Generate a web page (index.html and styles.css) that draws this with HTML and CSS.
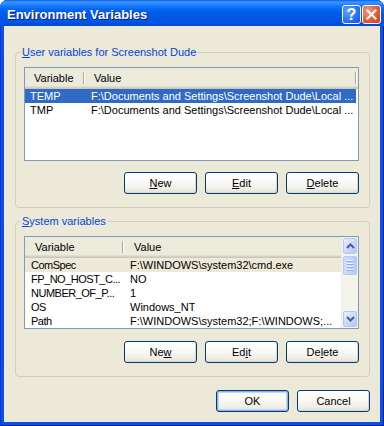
FILE: index.html
```html
<!DOCTYPE html>
<html lang="en">
<head>
    <meta charset="UTF-8">
    <title>Environment Variables</title>
    <link rel="stylesheet" href="styles.css">
</head>
<body>
    <div class="window">
        <div class="titlebar">
            <span class="title">Environment Variables</span>
            <div class="caption-buttons">
                <span class="cap cap-help">?</span>
                <span class="cap cap-close">
                    <svg width="11" height="11" viewBox="0 0 11 11"><path d="M1.5 1.5 L9.5 9.5 M9.5 1.5 L1.5 9.5" stroke="#fff" stroke-width="2" stroke-linecap="square"/></svg>
                </span>
            </div>
        </div>

        <div class="client">
            <fieldset class="group">
                <legend><u>U</u>ser variables for Screenshot Dude</legend>
                <div class="listview user-list">
                    <div class="lv-header">
                        <span class="col col-var">Variable</span>
                        <span class="col col-val">Value</span>
                    </div>
                    <div class="lv-row selected">
                        <span class="cell cell-var">TEMP</span>
                        <span class="cell">F:\Documents and Settings\Screenshot Dude\Local ...</span>
                    </div>
                    <div class="lv-row">
                        <span class="cell cell-var">TMP</span>
                        <span class="cell">F:\Documents and Settings\Screenshot Dude\Local ...</span>
                    </div>
                </div>
                <div class="button-row">
                    <button class="btn"><u>N</u>ew</button>
                    <button class="btn"><u>E</u>dit</button>
                    <button class="btn"><u>D</u>elete</button>
                </div>
            </fieldset>

            <fieldset class="group group-system">
                <legend><u>S</u>ystem variables</legend>
                <div class="listview system-list">
                    <div class="lv-body">
                        <div class="lv-header">
                            <span class="col col-var">Variable</span>
                            <span class="col col-val">Value</span>
                        </div>
                        <div class="lv-row inactive">
                            <span class="cell cell-var">ComSpec</span>
                            <span class="cell">F:\WINDOWS\system32\cmd.exe</span>
                        </div>
                        <div class="lv-row">
                            <span class="cell cell-var">FP_NO_HOST_C...</span>
                            <span class="cell">NO</span>
                        </div>
                        <div class="lv-row">
                            <span class="cell cell-var">NUMBER_OF_P...</span>
                            <span class="cell">1</span>
                        </div>
                        <div class="lv-row">
                            <span class="cell cell-var">OS</span>
                            <span class="cell">Windows_NT</span>
                        </div>
                        <div class="lv-row">
                            <span class="cell cell-var">Path</span>
                            <span class="cell">F:\WINDOWS\system32;F:\WINDOWS;...</span>
                        </div>
                    </div>
                    <div class="scrollbar">
                        <span class="sb-btn">
                            <svg width="9" height="6" viewBox="0 0 9 6"><path d="M1 5 L4.5 1.5 L8 5" fill="none" stroke="#4D6185" stroke-width="2"/></svg>
                        </span>
                        <div class="sb-track">
                            <span class="sb-thumb"><i></i><i></i><i></i><i></i></span>
                        </div>
                        <span class="sb-btn">
                            <svg width="9" height="6" viewBox="0 0 9 6"><path d="M1 1 L4.5 4.5 L8 1" fill="none" stroke="#4D6185" stroke-width="2"/></svg>
                        </span>
                    </div>
                </div>
                <div class="button-row button-row-system">
                    <button class="btn">Ne<u>w</u></button>
                    <button class="btn">Ed<u>i</u>t</button>
                    <button class="btn">De<u>l</u>ete</button>
                </div>
            </fieldset>

            <div class="dialog-buttons">
                <button class="btn btn-default">OK</button>
                <button class="btn">Cancel</button>
            </div>
        </div>
    </div>
</body>
</html>
```

FILE: styles.css
```css
/* Base */
html, body {
    margin: 0;
    padding: 0;
    background-color: #ffffff;
    font-family: "Liberation Sans", Arial, sans-serif;
    font-size: 11px;
}

/* Window frame */
.window {
    width: 384px;
    height: 426px;
    display: flex;
    flex-direction: column;
    background-color: #0753DF;
    border-radius: 8px 8px 0 0;
    box-shadow: inset 1px 0 #0831D9, inset -1px 0 #001EA0, inset 0 -1px #001EA0;
}

.titlebar {
    height: 26px;
    display: flex;
    align-items: center;
    padding: 0 3px 0 7px;
    border-radius: 7px 7px 0 0;
    background: linear-gradient(to bottom,
        #0A5EEA 0px, #3D95FF 2px, #2A87FF 4px, #157AFB 6px,
        #0667F3 9px, #005CE8 13px, #0058E6 18px, #0055E5 22px, #0048CC 26px);
}

.title {
    flex: 1;
    padding-top: 3px;
    color: #ffffff;
    font-weight: bold;
    font-size: 13px;
    text-shadow: 1px 1px #0A1C8A;
}

.caption-buttons {
    display: flex;
    gap: 1px;
    padding-top: 2px;
}

.cap {
    width: 17px;
    height: 17px;
    display: flex;
    align-items: center;
    justify-content: center;
    border: 1px solid #ffffff;
    border-radius: 3px;
}

.cap-help {
    background: radial-gradient(circle at 30% 30%, #5FA3FF, #2167F0 70%, #1A55D8);
    color: #ffffff;
    font-weight: bold;
    font-size: 16px;
    line-height: 17px;
}

.cap-close {
    background: radial-gradient(circle at 30% 30%, #F39C80, #E3582E 60%, #C8401A);
}

/* Client area */
.client {
    flex: 1;
    display: flex;
    flex-direction: column;
    margin: 0 4px 4px 4px;
    padding: 20px 10px 10px 11px;
    background-color: #ECE9D8;
}

.group {
    margin: 0;
    padding: 8px 10px 13px 8px;
    border: 1px solid #D0D0BF;
    border-radius: 4px;
}

.group legend {
    margin-left: -3px;
    padding: 0 1px;
    line-height: 13px;
    color: #0046D5;
}

.group-system {
    margin-top: 7px;
}

/* List views */
.listview {
    box-sizing: border-box;
    border: 1px solid #7F9DB9;
    background-color: #ffffff;
    overflow: hidden;
}

.user-list {
    height: 94px;
}

.system-list {
    height: 93px;
    display: flex;
}

.lv-body {
    flex: 1;
    overflow: hidden;
}

.lv-header {
    height: 21px;
    display: flex;
    background-color: #EBEADB;
    box-shadow: inset 0 -1px #CBC7B8, inset 0 -2px #D6D2C2, inset 0 -3px #E2DECD;
}

.col {
    position: relative;
    box-sizing: border-box;
    padding-left: 9px;
    line-height: 21px;
    white-space: nowrap;
}

.col::after {
    content: "";
    position: absolute;
    right: 0;
    top: 4px;
    bottom: 5px;
    width: 1px;
    background-color: #ACA899;
    border-right: 1px solid #ffffff;
}

.user-list .col-var { width: 60px; }
.user-list .col-val { width: 272px; }

.system-list .col-var { width: 99px; padding-left: 10px; }
.system-list .col-val { flex: 1; padding-left: 10px; }
.system-list .col-val::after { display: none; }

.lv-row {
    height: 14px;
    display: flex;
    line-height: 14px;
    white-space: nowrap;
}

.user-list .lv-row { width: 331px; }

.cell {
    padding-left: 6px;
    box-sizing: border-box;
    overflow: hidden;
}

.user-list .cell-var { width: 60px; padding-left: 5px; }

.system-list .cell-var {
    width: 99px;
    letter-spacing: -0.5px;
}

.lv-row.selected {
    background-color: #316AC5;
    color: #ffffff;
}

.lv-row.inactive {
    background-color: #ECE9D8;
}

/* Scrollbar */
.scrollbar {
    width: 17px;
    display: flex;
    flex-direction: column;
    background-color: #F5F4EC;
    border-left: 1px solid #EEEDE5;
    box-sizing: border-box;
}

.sb-btn {
    height: 16px;
    margin: 1px;
    display: flex;
    align-items: center;
    justify-content: center;
    border: 1px solid #B4C8F2;
    border-radius: 2px;
    box-sizing: border-box;
    background: linear-gradient(135deg, #E6EEFE, #C6D6FC 60%, #B4C9F8);
}

.sb-track {
    flex: 1;
    padding: 1px;
}

.sb-thumb {
    height: 19px;
    display: flex;
    flex-direction: column;
    align-items: center;
    justify-content: center;
    gap: 1px;
    border: 1px solid #B4C8F2;
    border-radius: 2px;
    box-sizing: border-box;
    background: linear-gradient(90deg, #CFDCFD, #C2D3FC 60%, #B6CAF8);
}

.sb-thumb i {
    width: 6px;
    height: 1px;
    background-color: #EEF3FF;
    border-bottom: 1px solid #8CA7E4;
}

/* Buttons */
.button-row {
    display: flex;
    justify-content: flex-end;
    gap: 8px;
    margin-top: 11px;
}

.button-row-system {
    margin-top: 12px;
}

.dialog-buttons {
    display: flex;
    justify-content: flex-end;
    gap: 8px;
    margin-top: 13px;
}

.btn {
    width: 73px;
    height: 22px;
    padding: 0;
    border: 1px solid #003C74;
    border-radius: 3px;
    background: linear-gradient(to bottom, #FFFFFF 0%, #FBFBF9 35%, #F1F0EA 75%, #E3E1D8 100%);
    box-shadow: inset -1px -1px 0 #DCD8CA;
    font-family: inherit;
    font-size: 11px;
    color: #000000;
}

.btn-default {
    box-shadow: inset 0 0 0 1px #8EB0EA, inset 0 0 0 2px #C2D6F6;
}
```
